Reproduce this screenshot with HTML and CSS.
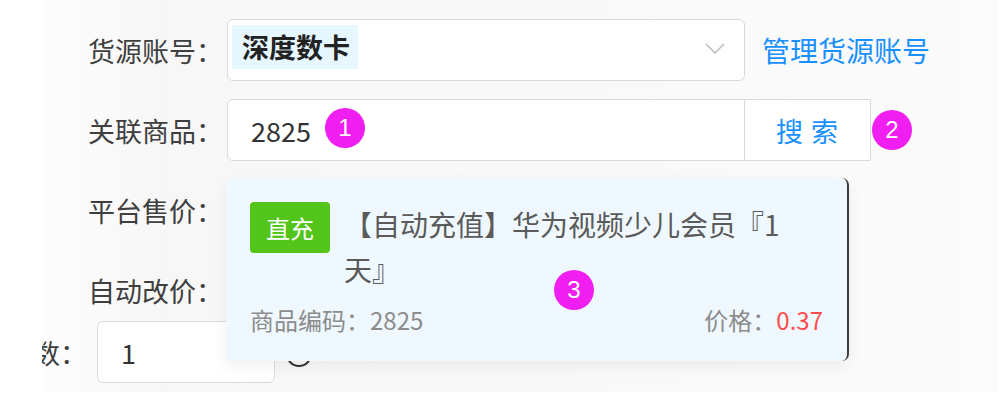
FILE: index.html
```html
<!DOCTYPE html>
<html>
	<head>
		<meta charset="utf-8">
		<link rel="stylesheet" href="styles.css">
	</head>
	<body>
		<div id="stage">
			<div class="form">
				<div class="row">
					<div class="label">货源账号：</div>
					<div class="select">
						<span class="chosen">深度数卡</span>
						<svg class="arrow" width="20" height="11" viewBox="0 0 20 11"><polyline points="1,1 10,10 19,1" fill="none" stroke="#bfbfbf" stroke-width="1.6"/></svg>
					</div>
					<a class="link" href="#">管理货源账号</a>
				</div>

				<div class="row">
					<div class="label">关联商品：</div>
					<div class="search">
						<div class="input joined">2825<span class="badge first">1</span></div>
						<button class="btn">搜 索</button>
					</div>
					<span class="badge second">2</span>
				</div>

				<div class="row">
					<div class="label">平台售价：</div>
				</div>

				<div class="row tight">
					<div class="label">自动改价：</div>
				</div>

				<div class="row">
					<div class="label short">数：</div>
					<div class="input small">1</div>
					<svg class="help" width="28" height="28" viewBox="0 0 28 28"><circle cx="14" cy="14" r="12" fill="none" stroke="#333" stroke-width="2"/></svg>
				</div>
			</div>

			<div id="result">
				<div class="item-head">
					<span class="tag">直充</span>
					<div class="item-title">【自动充值】华为视频少儿会员『1天』</div>
				</div>
				<div class="item-foot">
					<span>商品编码：2825</span>
					<span>价格：<em class="price">0.37</em></span>
				</div>
				<span class="badge third">3</span>
			</div>
		</div>
	</body>
</html>
```

FILE: styles.css
```css
body {
	margin: 0;
	background: #fff;
	font-family: "Noto Sans CJK SC", "Noto Sans", sans-serif;
}

#stage {
	position: relative;
	margin-left: 42px;
	width: 955px;
	height: 392px;
	overflow: hidden;
	background: linear-gradient(90deg, #fdfdfd 0%, #f7f7f7 12%, #f9f9f9 60%, #fbfbfb 100%);
}

.form {
	padding-top: 19px;
}

.row {
	display: flex;
	align-items: center;
	height: 62px;
	margin-bottom: 18px;
}

.row.tight {
	margin-bottom: 0;
}

.label {
	display: flex;
	justify-content: flex-end;
	flex: none;
	width: 181px;
	padding-right: 4px;
	font-size: 27px;
	line-height: 1;
	color: #3f3f3f;
	white-space: nowrap;
}

.label.short {
	width: 45px;
	padding-right: 10px;
}

.select {
	display: flex;
	align-items: flex-start;
	box-sizing: border-box;
	width: 518px;
	height: 62px;
	border: 1px solid #d9d9d9;
	border-radius: 6px;
	background: #fff;
	padding: 5px 4px 0;
}

.chosen {
	background: #e6f7ff;
	height: 44px;
	line-height: 44px;
	padding: 0 8px 0 10px;
	font-size: 27px;
	font-weight: 700;
	color: #222;
}

.arrow {
	margin: 18px 15px 0 auto;
}

.link {
	margin-left: 17px;
	font-size: 28px;
	line-height: 1;
	color: #1890ff;
	text-decoration: none;
}

.search {
	display: flex;
}

.input {
	display: flex;
	align-items: center;
	box-sizing: border-box;
	height: 62px;
	padding-left: 23px;
	border: 1px solid #d9d9d9;
	border-radius: 6px;
	background: #fff;
	font-size: 27px;
	color: #333;
}

.input.joined {
	width: 518px;
	border-radius: 6px 0 0 6px;
}

.input.small {
	width: 178px;
}

.btn {
	box-sizing: border-box;
	width: 126px;
	height: 62px;
	border: 1px solid #d9d9d9;
	border-left: none;
	border-radius: 0 2px 2px 0;
	background: #fff;
	font-family: inherit;
	font-size: 27px;
	letter-spacing: 1px;
	color: #1890ff;
}

.help {
	margin-left: 10px;
	margin-top: 4px;
}

.badge {
	display: inline-flex;
	align-items: center;
	justify-content: center;
	width: 40px;
	height: 40px;
	border-radius: 50%;
	background: #f01ef0;
	color: #fff;
	font-family: "Liberation Sans", sans-serif;
	font-size: 24px;
	line-height: 1;
}

.badge.first {
	margin-left: 14px;
	margin-top: -4px;
}

.badge.second {
	margin-left: 1px;
	margin-top: -1px;
}

.badge.third {
	position: absolute;
	left: 328px;
	top: 92px;
}

#result {
	position: absolute;
	left: 184px;
	top: 178px;
	z-index: 2;
	box-sizing: border-box;
	width: 623px;
	height: 183px;
	padding: 24px 24px 0 24px;
	background: #eff8fe;
	border-right: 2px solid #3c3c3c;
	border-radius: 0 7px 7px 0;
	box-shadow: 0 6px 16px rgba(0, 0, 0, 0.06);
}

.item-head {
	display: flex;
	align-items: flex-start;
}

.tag {
	flex: none;
	width: 80px;
	height: 51px;
	line-height: 51px;
	text-align: center;
	border-radius: 4px;
	background: #52c41a;
	color: #fff;
	font-size: 24px;
}

.item-title {
	max-width: 450px;
	margin-left: 14px;
	font-size: 28px;
	line-height: 45px;
	color: #5a5a5a;
}

.item-foot {
	display: flex;
	justify-content: space-between;
	margin-top: 13px;
	font-size: 24px;
	line-height: 30px;
	color: #8c8c8c;
}

.price {
	font-style: normal;
	color: #ff4d4f;
}
```
